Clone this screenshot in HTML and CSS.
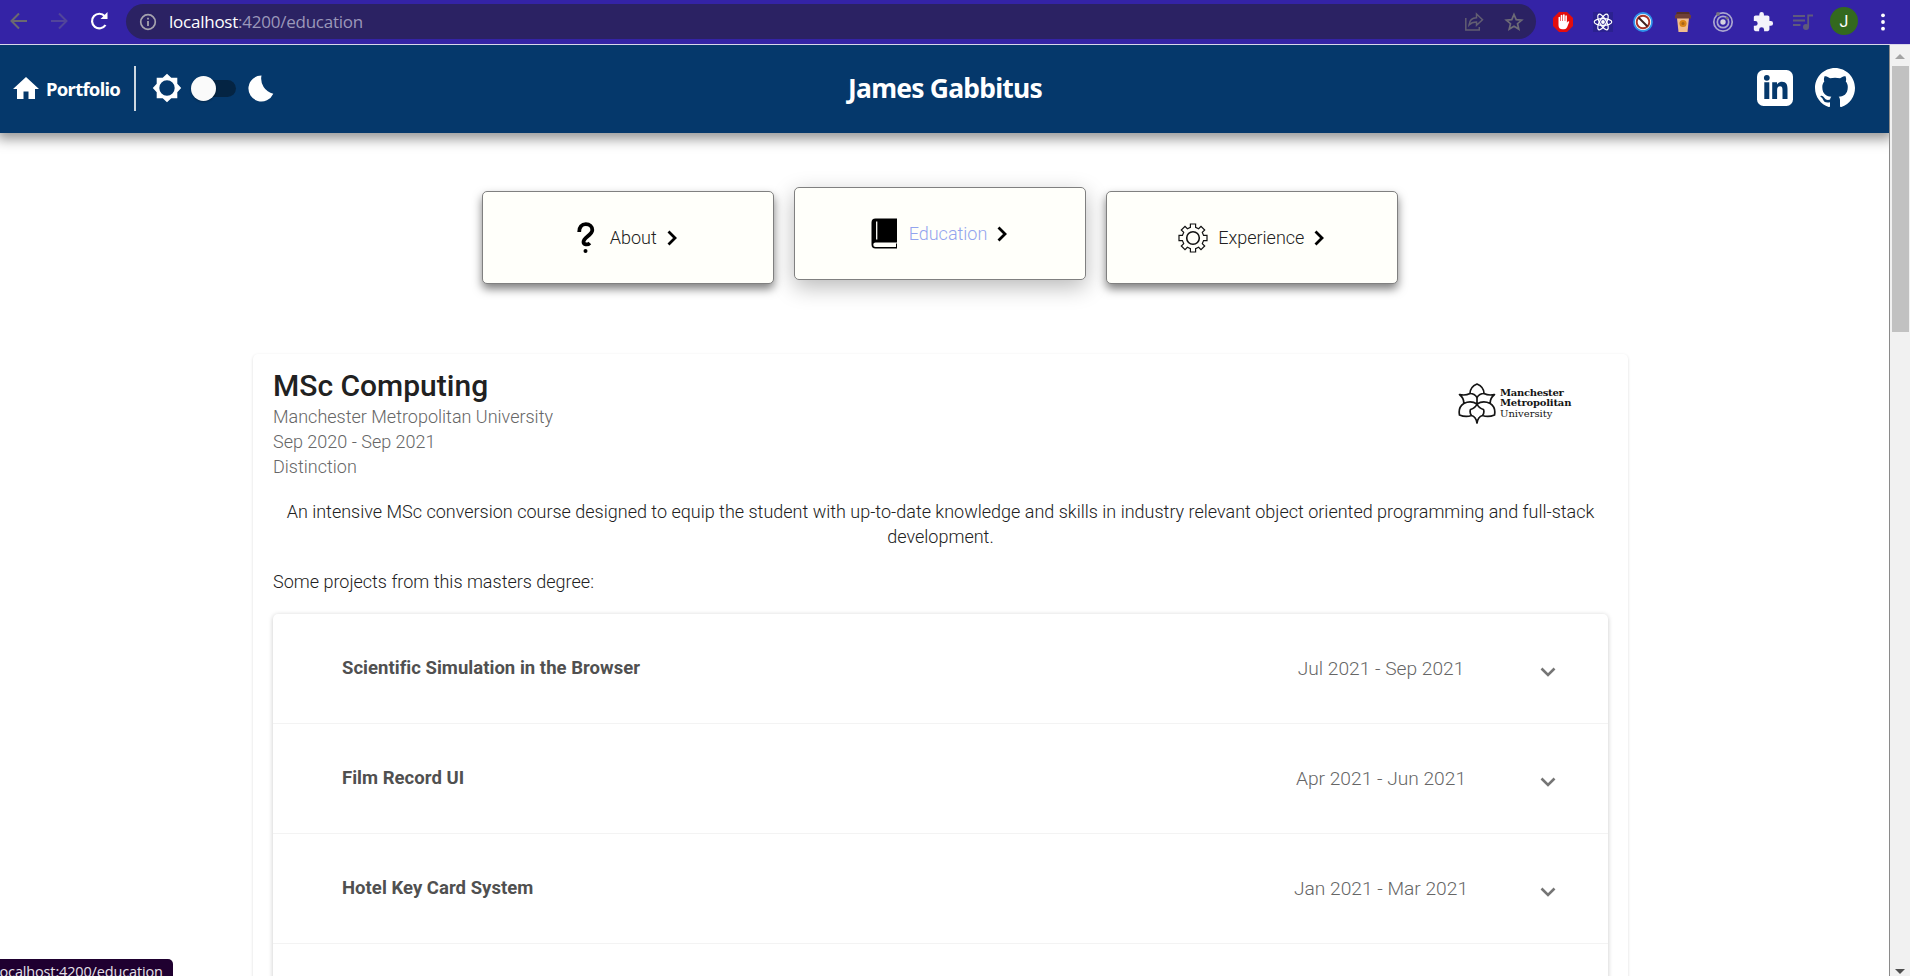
FILE: index.html
```html
<!DOCTYPE html>
<html lang="en">
<head>
<meta charset="utf-8">
<title>James Gabbitus</title>
<link rel="stylesheet" href="styles.css">
</head>
<body>
<div class="toolbar">
  <div class="nav">
    <span class="cell"><svg width="20" height="20" viewBox="0 0 20 20" fill="none" stroke="#6b6970" stroke-width="2"><path d="M18 10H3M10 2.500L2.500 10l7.500 7.500"/></svg></span>
    <span class="cell"><svg width="20" height="20" viewBox="0 0 20 20" fill="none" stroke="#51459a" stroke-width="2"><path d="M2 10h15M10 2.500l7.500 7.500-7.500 7.500"/></svg></span>
    <span class="cell"><svg width="20" height="20" viewBox="0 0 20 20"><path d="M16.500 14A7.300 7.300 0 1 1 15.800 5.200" fill="none" stroke="#fff" stroke-width="2.200"/><path d="M18.500 1v7h-7z" fill="#fff"/></svg></span>
  </div>
  <div class="address">
    <svg class="info" width="18" height="18" viewBox="0 0 18 18"><circle cx="9" cy="9" r="7.300" fill="none" stroke="#a5a3ae" stroke-width="1.700"/><path d="M8.100 8h1.800v5H8.100zM8.100 4.800h1.800v1.800H8.100z" fill="#a5a3ae"/></svg>
    <span class="url"><b>localhost</b>:4200/education</span>
    <span class="cell"><svg width="20" height="20" viewBox="0 0 20 20" fill="none" stroke="#625e72" stroke-width="1.500"><path d="M1.800 6v12h13.500v-3M5 13c.5-5 3.300-7.300 7.500-7.300V2l6 5.800-6 5.500V10C9 10 7 10.800 5 13z"/></svg></span>
    <span class="cell star"><svg width="20" height="20" viewBox="0 0 20 20" fill="none" stroke="#6d6b76" stroke-width="1.700"><path d="M10 2.500l2.200 5.100 5.500.5-4.200 3.600 1.300 5.400L10 14.200l-4.800 2.900 1.300-5.400L2.300 8.100l5.500-.5z"/></svg></span>
  </div>
  <div class="extensions">
    <span class="cell"><svg width="22" height="22" viewBox="0 0 22 22"><path d="M7 1h8l6 6v8l-6 6H7l-6-6V7z" fill="#e40d0d"/><path d="M6.500 11V6.300q.9-1 1.600 0V10h.6V4.300q.9-1 1.700 0V10h.6V3.700q.9-1 1.700 0V10h.6V4.800q.9-1 1.600 0v7l.9-1.200q1.200-.7 1.500.2l-2.200 5.500q-.8 2-3 2h-1.600q-4 0-4-4z" fill="#fff"/></svg></span>
    <span class="cell"><svg width="20" height="20" viewBox="0 0 20 20"><path fill="#2b2190" d="M0 0h20v20H0z"/><g fill="none" stroke="#fff" stroke-width="1.200"><ellipse cx="10" cy="10" rx="8.800" ry="3.300"/><ellipse cx="10" cy="10" rx="8.800" ry="3.300" transform="rotate(60 10 10)"/><ellipse cx="10" cy="10" rx="8.800" ry="3.300" transform="rotate(120 10 10)"/></g><circle cx="10" cy="10" r="1.900" fill="#fff"/></svg></span>
    <span class="cell"><svg width="20" height="20" viewBox="0 0 20 20"><circle cx="10" cy="10" r="9" fill="#fff" stroke="#2f93ea" stroke-width="1.800"/><circle cx="10" cy="10" r="6.300" fill="none" stroke="#a8352a" stroke-width="1.900"/><path d="M5.500 5.500l9 9" stroke="#402222" stroke-width="2"/></svg></span>
    <span class="cell"><svg width="18" height="22" viewBox="0 0 18 22"><path d="M3 7h12l-1.500 14h-9z" fill="#f0bd8d"/><path d="M3 1h12l1 3h1v3.500H1V4h1z" fill="#6f4037"/><path d="M3 1h12l.7 2H2.300z" fill="#563028"/><circle cx="9" cy="12.500" r="3.600" fill="#d98419"/><circle cx="9" cy="12.500" r="1.500" fill="#a7641a"/></svg></span>
    <span class="cell"><svg width="22" height="22" viewBox="0 0 22 22" fill="none" stroke="#aaa6cf" stroke-width="1.700"><circle cx="11" cy="11" r="9.200"/><circle cx="11" cy="11" r="5.700"/><circle cx="11" cy="11" r="2.700" fill="#d5d3e0" stroke="none"/><circle cx="6" cy="3" r="1.900" fill="#777580" stroke="none"/><circle cx="15" cy="7" r="1.600" fill="#777580" stroke="none"/></svg></span>
    <span class="cell"><svg width="22" height="22" viewBox="0 0 24 24" fill="#f4f2fb"><path d="M20.500 11H19V7c0-1.100-.9-2-2-2h-4V3.500a2.500 2.500 0 0 0-5 0V5H4c-1.100 0-2 .9-2 2v3.800h1.500a2.700 2.700 0 0 1 0 5.400H2V20c0 1.100.9 2 2 2h3.800v-1.500a2.700 2.700 0 0 1 5.400 0V22H17c1.100 0 2-.9 2-2v-4h1.500a2.500 2.500 0 0 0 0-5z"/></svg></span>
    <span class="cell"><svg width="20" height="18" viewBox="0 0 20 18" fill="none" stroke="#5f5a7c" stroke-width="1.800"><path d="M0 3h12M0 7.500h12M0 12h7.500M15.200 14V2.500H20"/><circle cx="13" cy="14" r="3" fill="#5f5a7c" stroke="none"/></svg></span>
    <span class="avatar">J</span>
    <span class="cell"><svg width="6" height="18" viewBox="0 0 6 18" fill="#fff"><circle cx="3" cy="2.300" r="1.900"/><circle cx="3" cy="9" r="1.900"/><circle cx="3" cy="15.700" r="1.900"/></svg></span>
  </div>
</div>
<div class="viewport">
  <div class="page">
    <header class="header">
      <div class="brand">
        <svg width="26" height="22" viewBox="0 0 26 22" fill="#fff"><path d="M13 0L0 12h4v10h6.500v-7.500h5V22H22V12h4z"/></svg>
        <span class="brand-name">Portfolio</span>
        <span class="divider"></span>
        <svg width="30" height="30" viewBox="0 0 30 30"><path fill="#fff" fill-rule="evenodd" d="M15 .8l4.300 3.900h6v6L29.200 15l-3.900 4.300v6h-6L15 29.200l-4.300-3.900h-6v-6L.8 15l3.900-4.300v-6h6zM15 7.300a7.700 7.700 0 1 0 0 15.400 7.700 7.700 0 0 0 0-15.400z"/></svg>
        <span class="toggle"><span class="knob"></span></span>
        <svg width="26" height="27" viewBox="0 0 26 27"><path fill="#fff" d="M13.500.5A13 13 0 1 0 25.300 18.800 15.500 15.500 0 0 1 13.500.5z"/></svg>
      </div>
      <h1 class="name">James Gabbitus</h1>
      <div class="social">
        <svg width="36" height="36" viewBox="0 0 36 36"><rect width="36" height="36" rx="6.500" fill="#fff"/><g fill="#05386b"><circle cx="9.800" cy="7.800" r="2.900"/><path d="M7.300 12.300h5V29h-5zM15.200 12.300H20v2.300c1-1.800 2.800-2.800 5-2.800 4.400 0 5.500 2.900 5.500 7V29h-5v-8.800c0-2.400-.4-4-2.500-4-2 0-2.900 1.500-2.900 4V29h-4.900z"/></g></svg>
        <svg width="40" height="40" viewBox="0 0 16 16" fill="#fff"><path d="M8 0C3.580 0 0 3.580 0 8c0 3.540 2.290 6.530 5.470 7.590.4.070.55-.17.55-.38 0-.19-.01-.82-.01-1.490-2.010.37-2.530-.49-2.690-.94-.09-.23-.48-.94-.82-1.130-.28-.15-.68-.52-.01-.53.63-.01 1.080.58 1.230.82.720 1.210 1.870.87 2.330.66.070-.52.280-.87.510-1.070-1.780-.2-3.640-.89-3.640-3.950 0-.87.310-1.590.82-2.150-.08-.2-.36-1.020.08-2.120 0 0 .67-.21 2.200.82.640-.18 1.320-.27 2-.27s1.360.09 2 .27c1.530-1.040 2.200-.82 2.200-.82.440 1.100.16 1.920.08 2.120.51.560.82 1.270.82 2.150 0 3.070-1.870 3.750-3.650 3.950.29.250.54.730.54 1.480 0 1.070-.01 1.930-.01 2.200 0 .21.150.46.550.38A8.01 8.01 0 0 0 16 8c0-4.420-3.580-8-8-8z"/></svg>
      </div>
    </header>
    <nav class="tabs">
      <a class="tab">
        <svg class="tab-icon question" width="18" height="32" viewBox="0 0 18 32"><path d="M2.200 10C2 5 4.800 2.200 8.800 2.200c4 0 6.500 2.600 6.500 5.800 0 5-8.800 7.500-8.800 12 0 2.500 4 3.500 6.300.9" fill="none" stroke="#000" stroke-width="3.800"/><circle cx="8.500" cy="29" r="2" fill="#000"/></svg>
        <span>About</span>
        <svg class="chev" width="10" height="16" viewBox="0 0 10 16"><path d="M1.500 1.500L8 8l-6.500 6.500" fill="none" stroke="#000" stroke-width="2.800"/></svg>
      </a>
      <a class="tab active">
        <svg class="tab-icon book" width="27" height="31" viewBox="0 0 27 31"><path d="M4.500.5H26v24H4.500a2.200 2.200 0 0 0 0 4.500H25v-3.500h1V30.500H4.500A4 4 0 0 1 .5 26.500v-22a4 4 0 0 1 4-4z"/><path d="M5.700 3.500v18" stroke="#fffffa" stroke-width="1.300"/></svg>
        <span>Education</span>
        <svg class="chev" width="10" height="16" viewBox="0 0 10 16"><path d="M1.500 1.500L8 8l-6.500 6.500" fill="none" stroke="#000" stroke-width="2.800"/></svg>
      </a>
      <a class="tab">
        <svg class="tab-icon gear" width="30" height="30" viewBox="0 0 30 30" fill="none" stroke="#111" stroke-width="1.200"><path d="M12.400 1h5.200v3.400l3 1.300L23 3.300 26.700 7l-2.400 2.400 1.300 3H29v5.200h-3.400l-1.300 3 2.400 2.400-3.700 3.700-2.400-2.400-3 1.300V29h-5.200v-3.400l-3-1.300L7 26.700 3.300 23l2.400-2.400-1.300-3H1v-5.200h3.400l1.300-3L3.300 7 7 3.300l2.400 2.400 3-1.300z"/><circle cx="15" cy="15" r="6.300" stroke-width="1.600"/></svg>
        <span>Experience</span>
        <svg class="chev" width="10" height="16" viewBox="0 0 10 16"><path d="M1.500 1.500L8 8l-6.500 6.500" fill="none" stroke="#000" stroke-width="2.800"/></svg>
      </a>
    </nav>
    <main class="card">
      <div class="card-head">
        <div class="details">
          <h2>MSc Computing</h2>
          <p>Manchester Metropolitan University</p>
          <p>Sep 2020 - Sep 2021</p>
          <p>Distinction</p>
        </div>
        <div class="logo">
          <svg width="38" height="41" viewBox="0 0 38 41" fill="none" stroke="#151515" stroke-width="1.700" stroke-linejoin="round"><path d="M12 10.500C12 5.500 15 2.700 19 1c4 1.700 7 4.500 7 9.500-3.300 0-5.500 1.500-7 4-1.500-2.500-3.700-4-7-4z"/><path d="M12 10.500C8.500 12.300 5 12.300 1.500 11.500 4.500 14 6 17 5.800 20.500M26 10.500c3.500 1.800 7 1.800 10.500 1-3 2.500-4.500 5.500-4.300 9M19 14.500V21c-3.500-2.200-8-3-13.200-.5M19 21c3.500-2.200 8-3 13.200-.5M5.800 20.500C2 23 .5 27 1.500 32c4 1.700 8 2 12 .5M32.200 20.500C36 23 37.500 27 36.500 32c-4 1.700-8 2-12 .5M19 21c-1 2.500-3 4.500-6.500 5.500-.8 2.300-.4 4.200 1 6 3 .8 4.800 3 5.500 7.500.7-4.500 2.500-6.700 5.500-7.500 1.400-1.800 1.800-3.700 1-6C22 25.500 20 23.500 19 21z"/></svg>
          <div class="logo-text"><b class="l1">Manchester</b><b class="l2">Metropolitan</b><span>University</span></div>
        </div>
      </div>
      <p class="description">An intensive MSc conversion course designed to equip the student with up-to-date knowledge and skills in industry relevant object oriented programming and full-stack development.</p>
      <p class="intro">Some projects from this masters degree:</p>
      <div class="accordion">
        <div class="row"><b>Scientific Simulation in the Browser</b><span class="date">Jul 2021 - Sep 2021</span><svg width="16" height="10" viewBox="0 0 16 10"><path d="M1.500 1.500L8 8l6.500-6.500" fill="none" stroke="#757575" stroke-width="2.600"/></svg></div>
        <div class="row"><b>Film Record UI</b><span class="date">Apr 2021 - Jun 2021</span><svg width="16" height="10" viewBox="0 0 16 10"><path d="M1.500 1.500L8 8l6.500-6.500" fill="none" stroke="#757575" stroke-width="2.600"/></svg></div>
        <div class="row"><b>Hotel Key Card System</b><span class="date">Jan 2021 - Mar 2021</span><svg width="16" height="10" viewBox="0 0 16 10"><path d="M1.500 1.500L8 8l6.500-6.500" fill="none" stroke="#757575" stroke-width="2.600"/></svg></div>
        <div class="row"></div>
      </div>
    </main>
  </div>
  <div class="scrollbar">
    <svg width="10" height="5" viewBox="0 0 10 5"><path d="M0 5l5-5 5 5z" fill="#a3a3a3"/></svg>
    <div class="thumb"></div>
    <svg class="down" width="10" height="5" viewBox="0 0 10 5"><path d="M0 0l5 5 5-5z" fill="#505050"/></svg>
  </div>
</div>
<div class="status">localhost:4200/education</div>
</body>
</html>
```
FILE: styles.css
```css
* { box-sizing: border-box; }
body {
  margin: 0;
  height: 976px;
  overflow: hidden;
  position: relative;
  display: flex;
  flex-direction: column;
  background: #fff;
  font-family: Roboto, sans-serif;
  font-size: 18px;
  font-weight: 300;
  color: #212121;
}
svg { display: block; flex: none; }
h1, h2, p { margin: 0; }

/* Browser toolbar */
.toolbar {
  height: 45px;
  flex: none;
  display: flex;
  align-items: flex-start;
  background: #3423a6;
  border-bottom: 1px solid #d9d6ea;
}
.cell {
  width: 40px;
  height: 43px;
  flex: none;
  display: flex;
  align-items: center;
  justify-content: center;
}
.nav { display: flex; margin: -1px 7px 0 -1px; }
.address {
  width: 1410px;
  height: 35px;
  margin-top: 4px;
  padding: 0 3px 0 13px;
  border-radius: 18px;
  display: flex;
  align-items: center;
  background: #2b2263;
}
.url {
  flex: 1;
  margin-left: 12px;
  font-family: "Open Sans", "Noto Sans", sans-serif;
  font-size: 17px;
  font-weight: 400;
  letter-spacing: -0.24px;
  color: #9b98ba;
}
.url b { font-weight: 400; color: #fff; }
.star { width: 39px; }
.extensions { display: flex; margin-left: 7px; }
.avatar {
  width: 28px;
  height: 28px;
  margin: 7px 5px 0 7px;
  border-radius: 50%;
  background: #33691e;
  color: #fff;
  font-size: 16px;
  font-weight: 400;
  line-height: 29px;
  text-align: center;
}

/* Page */
.viewport { flex: 1; min-height: 0; display: flex; }
.page { width: 1890px; flex: none; border-right: 1px solid #8a8a8a; overflow: hidden; }
.header {
  height: 88px;
  width: 1890px;
  display: grid;
  grid-template-columns: 1fr auto 1fr;
  align-items: center;
  background: #05386b;
  box-shadow: 0 3px 12px 3px rgba(0, 0, 0, .42);
}
.brand { display: flex; align-items: center; padding: 0 0 2px 13px; }
.brand-name, .name {
  font-family: "Noto Sans", sans-serif;
  color: #fff;
}
.brand-name { font-size: 18.5px; font-weight: 700; margin-left: 7px; width: 77px; letter-spacing: -0.73px; }
.divider { width: 2px; height: 45px; margin: 0 16px 0 11px; background: #cdd7e1; }
.toggle {
  width: 45px;
  height: 17px;
  margin: 0 12px 0 9px;
  border-radius: 9px;
  display: flex;
  align-items: center;
  background: linear-gradient(90deg, transparent 8px, #042443 8px);
}
.knob { width: 25px; height: 25px; border-radius: 50%; background: #fafafa; box-shadow: 0 1px 2px rgba(0, 0, 0, .3); }
.name { font-size: 26.5px; font-weight: 700; letter-spacing: -0.8px; line-height: 86px; height: 88px; }
.social { display: flex; align-items: center; justify-content: flex-end; gap: 22px; padding: 0 35px 2px 0; }

.tabs { display: flex; justify-content: center; gap: 20.3px; margin-top: 58px; padding-right: 9px; }
.tab {
  width: 292px;
  height: 93px;
  padding-right: 2px;
  display: flex;
  align-items: center;
  justify-content: center;
  border: 1px solid #808080;
  border-radius: 5px;
  background: #fffffa;
  box-shadow: 0 5px 10px rgba(0, 0, 0, .5);
}
.active {
  margin: -4px 0 4px;
  color: #93a4ee;
  box-shadow: 0 7px 22px rgba(0, 0, 0, .28);
}
.question { margin-right: 15px; }
.book { margin-right: 11px; }
.gear { margin-right: 10px; }
.chev { margin-left: 10px; }

.card {
  width: 1375px;
  height: 800px;
  margin: 70px 0 0 253px;
  padding: 14px 20px;
  border-radius: 5px;
  box-shadow: 0 1px 3px rgba(0, 0, 0, .15);
}
.card-head { display: flex; justify-content: space-between; }
h2 { font-size: 30px; font-weight: 500; line-height: 36px; }
.details p { line-height: 25.2px; color: #666; }
.logo { display: flex; align-items: center; height: 41px; margin: 15px 35px 0 0; gap: 4px; color: #151515; }
.logo-text { width: 73px; display: flex; flex-direction: column; font: 10px/10.5px "DejaVu Serif", serif; white-space: nowrap; }
.logo-text .l1 { letter-spacing: -0.3px; }
.logo-text .l2 { letter-spacing: -0.2px; }
.description { margin-top: 19.4px; line-height: 25.2px; text-align: center; }
.intro { margin-top: 19.5px; line-height: 25.2px; }
.accordion { margin-top: 19.5px; border-radius: 5px; box-shadow: 0 1px 5px rgba(0, 0, 0, .22); }
.row {
  height: 110px;
  display: grid;
  grid-template-columns: 930px 268px 16px;
  align-items: center;
  padding-left: 69px;
  border-bottom: 1px solid #f3f3f3;
}
.row b { font-size: 18.5px; font-weight: 700; letter-spacing: 0.03px; color: #505050; }
.date { width: 218px; text-align: center; font-size: 19.2px; color: #666; }
.row svg { margin-top: 8px; }

.scrollbar {
  width: 20px;
  display: flex;
  flex-direction: column;
  align-items: center;
  padding-top: 9px;
  background: #f1f1f1;
}
.thumb { width: 17px; height: 266px; margin: 7px 0 0 1px; background: #c1c1c1; }
.down { margin: auto 0 2px; }

.status {
  position: absolute;
  left: 0;
  bottom: 0;
  width: 173px;
  height: 17px;
  overflow: hidden;
  border-radius: 0 5px 0 0;
  background: #1f0030;
  color: #e6e2ea;
  font: 400 14.5px/26px "Open Sans", sans-serif;
  letter-spacing: -0.15px;
  text-indent: -4px;
  white-space: nowrap;
}
```
